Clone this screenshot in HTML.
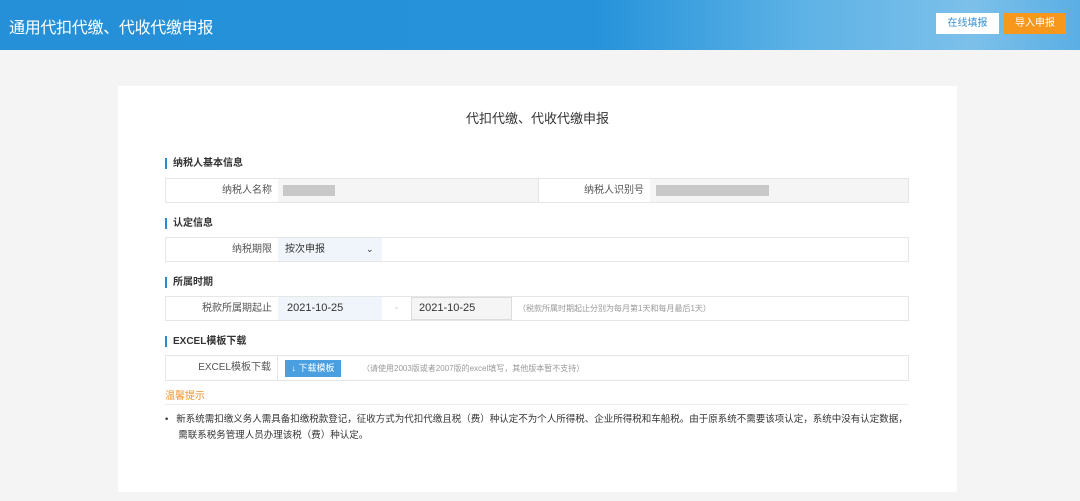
<!DOCTYPE html>
<html><head><meta charset="utf-8"><style>
*{margin:0;padding:0;box-sizing:border-box}
body{width:1080px;height:501px;background:#f4f4f4;font-family:"Liberation Sans","Noto Sans CJK SC",sans-serif;position:relative;overflow:hidden;color:#333}
.hd{position:absolute;left:0;top:0;width:1080px;height:50px;background:linear-gradient(90deg,#2590d8 0%,#2592da 55%,#5fb3e6 75%,#7cc0ea 90%,#5aaee4 100%)}
.hd h1{position:absolute;left:9px;top:14px;font-size:16px;font-weight:normal;color:#fff;letter-spacing:-0.3px}
.b1{position:absolute;left:936px;top:13px;width:63px;height:21px;background:#fff;color:#3a8fd0;font-size:10px;text-align:center;line-height:21px}
.b2{position:absolute;left:1004px;top:13px;width:62px;height:21px;background:#f7981d;color:#fff;font-size:10px;text-align:center;line-height:21px}
.card{position:absolute;left:118px;top:86px;width:839px;height:406px;background:#fff}
.t{position:absolute;left:0;width:839px;top:108px;text-align:center;font-size:13px}
.sec{position:absolute;left:165px;font-size:10px;font-weight:bold;border-left:2px solid #2a8ad0;padding-left:6px;line-height:11px}
.row{position:absolute;left:165px;width:744px;height:25px;border:1px solid #e6e6e6;font-size:10px}
.c{position:absolute;top:0;height:23px;line-height:23px}
.lb{text-align:right;color:#555;padding-right:6px}
.gray{background:#c8c8c8;position:absolute;height:11px;top:6px}
</style></head><body>
<div class="hd"><h1>通用代扣代缴、代收代缴申报</h1><div class="b1">在线填报</div><div class="b2">导入申报</div></div>
<div class="card"></div>
<div class="t" style="left:118px">代扣代缴、代收代缴申报</div>
<div class="sec" style="top:158px">纳税人基本信息</div>
<div class="row" style="top:178px">
<div class="c lb" style="left:0;width:112px">纳税人名称</div>
<div class="c" style="left:112px;width:260px;background:#f5f5f5"></div><div class="gray" style="left:117px;width:52px"></div>
<div class="c lb" style="left:372px;width:112px;border-left:1px solid #e6e6e6">纳税人识别号</div>
<div class="c" style="left:484px;width:258px;background:#f5f5f5"></div><div class="gray" style="left:490px;width:113px"></div>
</div>
<div class="sec" style="top:218px">认定信息</div>
<div class="row" style="top:237px">
<div class="c lb" style="left:0;width:112px">纳税期限</div>
<div class="c" style="left:112px;width:104px;background:#f0f5fb;padding-left:7px;color:#333">按次申报<span style="position:absolute;left:88px;font-size:9px">⌄</span></div>
</div>
<div class="sec" style="top:277px">所属时期</div>
<div class="row" style="top:296px">
<div class="c lb" style="left:0;width:112px">税款所属期起止</div>
<div class="c" style="left:112px;width:104px;background:#f0f5fb;padding-left:9px;font-size:11px">2021-10-25</div>
<div class="c" style="left:216px;width:29px;text-align:center;color:#bbb">-</div>
<div class="c" style="left:245px;width:101px;background:#f5f5f5;border:1px solid #ddd;padding-left:7px;font-size:11px;line-height:21px">2021-10-25</div>
<div class="c" style="left:352px;font-size:8px;color:#999">（税款所属时期起止分别为每月第1天和每月最后1天）</div>
</div>
<div class="sec" style="top:336px">EXCEL模板下载</div>
<div class="row" style="top:355px;height:26px">
<div class="c lb" style="left:0;width:112px;height:24px;line-height:24px;border-right:1px solid #e6e6e6">EXCEL模板下载</div>
<div style="position:absolute;left:119px;top:4px;width:56px;height:17px;background:#4a9fe0;color:#fff;font-size:9px;line-height:17px;text-align:center">↓ 下载模板</div>
<div class="c" style="left:196px;font-size:8px;color:#999;line-height:25px">（请使用2003版或者2007版的excel填写，其他版本暂不支持）</div>
</div>
<div style="position:absolute;left:165px;top:387px;font-size:10px;color:#f0932b">温馨提示</div>
<div style="position:absolute;left:165px;top:404px;width:744px;border-top:1px solid #eee"></div>
<div style="position:absolute;left:165px;top:412px;font-size:9.5px;line-height:16px;color:#333">•&nbsp;&nbsp;&nbsp;新系统需扣缴义务人需具备扣缴税款登记，征收方式为代扣代缴且税（费）种认定不为个人所得税、企业所得税和车船税。由于原系统不需要该项认定，系统中没有认定数据，<br>&nbsp;&nbsp;&nbsp;&nbsp;&nbsp;需联系税务管理人员办理该税（费）种认定。</div>
</body></html>
